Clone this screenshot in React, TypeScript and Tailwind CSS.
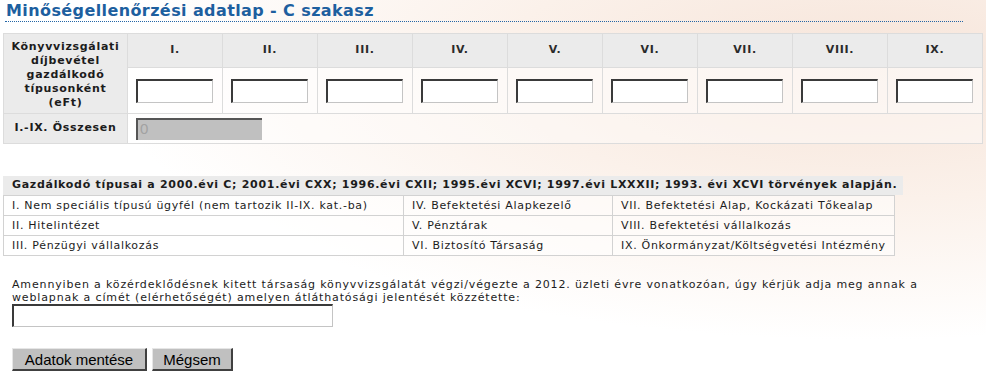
import React from "react";

const cols = ["I.", "II.", "III.", "IV.", "V.", "VI.", "VII.", "VIII.", "IX."];

const types = [
  [
    "I. Nem speciális típusú ügyfél (nem tartozik II-IX. kat.-ba)",
    "IV. Befektetési Alapkezelő",
    "VII. Befektetési Alap, Kockázati Tőkealap",
  ],
  ["II. Hitelintézet", "V. Pénztárak", "VIII. Befektetési vállalkozás"],
  [
    "III. Pénzügyi vállalkozás",
    "VI. Biztosító Társaság",
    "IX. Önkormányzat/Költségvetési Intézmény",
  ],
];

const inset =
  "border-t-2 border-l-2 border-r border-b border-t-[#3a3a3a] border-l-[#3a3a3a] border-r-[#c4c4c4] border-b-[#c4c4c4]";

const btn =
  "h-[23px] border-t border-l border-r-2 border-b-2 border-t-[#e6e6e6] border-l-[#e6e6e6] border-r-[#404040] border-b-[#404040] bg-[#c0c0c0] leading-[19px]";

function App() {
  return (
    <div className="min-h-[378px] w-[986px] bg-white bg-[radial-gradient(ellipse_at_88%_18%,#f6e4d9_0%,#fbf1ea_30%,#ffffff_62%)] font-['DejaVu_Sans',Verdana,sans-serif] text-[#1c1c1c]">
      <div className="ml-[5px] w-[958px] border-b border-dotted border-[#2466a6]">
        <h1 className="pl-[1px] pt-[1px] text-[16px] leading-[20px] font-bold tracking-[0.4px] text-[#1d5f9f]">
          Minőségellenőrzési adatlap - C szakasz
        </h1>
      </div>

      <table className="ml-[3px] mt-[11px] w-[979px] table-fixed border-collapse text-[11px] tracking-[0.7px]">
        <colgroup>
          <col className="w-[124px]" />
          {cols.map((c) => (
            <col key={c} className="w-[95px]" />
          ))}
        </colgroup>
        <tbody>
          <tr className="h-[34px]">
            <td
              rowSpan={2}
              className="border border-[#dcdcdc] bg-[#ebebeb] pt-[2px] text-center align-middle font-bold leading-[14px]"
            >
              Könyvvizsgálati
              <br />
              díjbevétel
              <br />
              gazdálkodó
              <br />
              típusonként
              <br />
              (eFt)
            </td>
            {cols.map((c) => (
              <th
                key={c}
                className="border border-[#dcdcdc] bg-[#ebebeb] text-center align-middle font-bold text-[#2a2a2a]"
              >
                {c}
              </th>
            ))}
          </tr>
          <tr className="h-[46px]">
            {cols.map((c) => (
              <td
                key={c}
                className="border border-[#dcdcdc] bg-white/60 pl-[8px] align-middle"
              >
                <input
                  className={`block h-[24px] w-[77px] bg-white ${inset}`}
                />
              </td>
            ))}
          </tr>
          <tr className="h-[30px]">
            <td className="border border-[#dcdcdc] bg-[#ebebeb] text-center align-middle font-bold">
              I.-IX. Összesen
            </td>
            <td
              colSpan={9}
              className="border border-[#dcdcdc] bg-white/40 pl-[8px] align-middle"
            >
              <input
                disabled
                value="0"
                readOnly
                className="block h-[22px] w-[126px] border-t-2 border-l-2 border-t-[#555] border-l-[#555] bg-[#c0c0c0] pl-[2px] font-['Liberation_Sans',Arial,sans-serif] text-[15px] tracking-normal text-[#a2a2a2]"
              />
            </td>
          </tr>
        </tbody>
      </table>

      <div className="ml-[3px] mt-[32px] text-[11px] tracking-[0.7px]">
        <div className="flex h-[19px] w-[900px] items-center bg-[#ebebeb] pl-[9px] font-bold whitespace-nowrap">
          Gazdálkodó típusai a 2000.évi C; 2001.évi CXX; 1996.évi CXII; 1995.évi
          XCVI; 1997.évi LXXXII; 1993. évi XCVI törvények alapján.
        </div>
        <table className="w-[891px] table-fixed border-collapse">
          <colgroup>
            <col className="w-[400px]" />
            <col className="w-[209px]" />
            <col className="w-[282px]" />
          </colgroup>
          <tbody>
            {types.map((row, i) => (
              <tr key={i} className="h-[20px]">
                {row.map((t) => (
                  <td
                    key={t}
                    className="border border-[#d2d2d2] bg-white/50 pl-[8px] align-middle leading-[14px] whitespace-nowrap"
                  >
                    {t}
                  </td>
                ))}
              </tr>
            ))}
          </tbody>
        </table>
      </div>

      <div className="ml-[12px] mt-[22px] text-[11px] leading-[13px]">
        <p className="whitespace-nowrap tracking-[0.85px]">
          Amennyiben a közérdeklődésnek kitett társaság könyvvizsgálatát
          végzi/végezte a 2012. üzleti évre vonatkozóan, úgy kérjük adja meg
          annak a
          <br />
          weblapnak a címét (elérhetőségét) amelyen átláthatósági jelentését
          közzétette:
        </p>
        <input
          className={`block h-[23px] w-[321px] bg-white ${inset}`}
        />
        <div className="mt-[21px] flex gap-[5px] font-['Liberation_Sans',Arial,sans-serif] text-[15px] text-black">
          <button className={`${btn} w-[135px]`}>Adatok mentése</button>
          <button className={`${btn} w-[81px]`}>Mégsem</button>
        </div>
      </div>
    </div>
  );
}

export default App;
